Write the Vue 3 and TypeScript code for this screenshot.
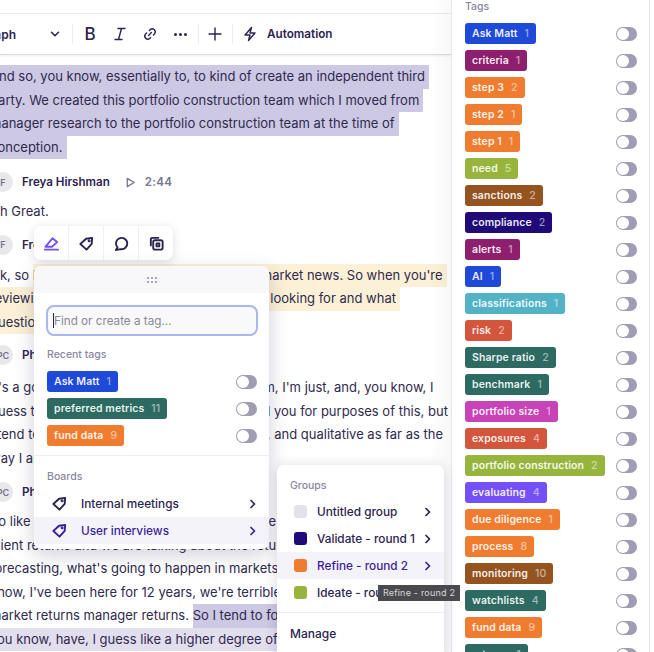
<script setup lang="ts">
interface Tag {
  name: string
  count: number
  color: string
}

const blue = '#1f49d8'
const plum = '#8e1f6e'
const orange = '#f07c30'
const green = '#97b53d'
const brown = '#95531f'
const navy = '#1f0a78'
const cyan = '#52b3c6'
const red = '#d3553c'
const teal = '#2c6a62'
const pink = '#c943b8'
const violet = '#7350f8'

const tags: Tag[] = [
  { name: 'Ask Matt', count: 1, color: blue },
  { name: 'criteria', count: 1, color: plum },
  { name: 'step 3', count: 2, color: orange },
  { name: 'step 2', count: 1, color: orange },
  { name: 'step 1', count: 1, color: orange },
  { name: 'need', count: 5, color: green },
  { name: 'sanctions', count: 2, color: brown },
  { name: 'compliance', count: 2, color: navy },
  { name: 'alerts', count: 1, color: plum },
  { name: 'AI', count: 1, color: blue },
  { name: 'classifications', count: 1, color: cyan },
  { name: 'risk', count: 2, color: red },
  { name: 'Sharpe ratio', count: 2, color: teal },
  { name: 'benchmark', count: 1, color: teal },
  { name: 'portfolio size', count: 1, color: pink },
  { name: 'exposures', count: 4, color: red },
  { name: 'portfolio construction', count: 2, color: green },
  { name: 'evaluating', count: 4, color: violet },
  { name: 'due diligence', count: 1, color: orange },
  { name: 'process', count: 8, color: orange },
  { name: 'monitoring', count: 10, color: brown },
  { name: 'watchlists', count: 4, color: teal },
  { name: 'fund data', count: 9, color: orange },
  { name: 'returns', count: 1, color: teal },
]

const recent: Tag[] = [
  { name: 'Ask Matt', count: 1, color: blue },
  { name: 'preferred metrics', count: 11, color: teal },
  { name: 'fund data', count: 9, color: orange },
]

const groups = [
  { name: 'Untitled group', color: '#e2e2ea', active: false },
  { name: 'Validate - round 1', color: navy, active: false },
  { name: 'Refine - round 2', color: orange, active: true },
  { name: 'Ideate - round 3', color: green, active: false },
]
</script>

<template>
  <div class="page">
    <main class="main">
      <div class="topstrip"></div>
      <div class="toolbar">
        <span class="para">Paragraph</span>
        <svg class="ic chev" viewBox="0 0 16 16"><path d="M4 6l4 4 4-4" /></svg>
        <i class="sep"></i>
        <span class="bold">B</span>
        <svg class="ic ital" viewBox="0 0 16 16"><path d="M6 2.500h7M3 13.500h7M9.500 2.500l-3 11" /></svg>
        <svg class="ic link" viewBox="0 0 16 16"><path d="M6.600 9.400l2.800-2.800M7.400 4.400l1-1a3.100 3.100 0 0 1 4.300 4.300l-1.300 1.300M8.600 11.600l-1 1a3.100 3.100 0 0 1-4.300-4.300l1.300-1.300" /></svg>
        <span class="more"><b></b><b></b><b></b></span>
        <i class="sep"></i>
        <svg class="ic plus" viewBox="0 0 16 16"><path d="M8 2v12M2 8h12" /></svg>
        <i class="sep"></i>
        <svg class="ic bolt" viewBox="0 0 16 16"><path d="M9.500 1.500L3 9h5l-1.500 5.500L13 7H8z" /></svg>
        <span class="auto">Automation</span>
      </div>

      <div class="transcript">
        <div class="para-text first">
          <div><span class="hl">And so, you know, essentially to, to kind of create an independent third</span></div>
          <div><span class="hl">party. We created this portfolio construction team which I moved from</span></div>
          <div><span class="hl">manager research to the portfolio construction team at the time of</span></div>
          <div><span class="hl">conception.</span></div>
        </div>

        <div class="speaker s1">
          <span class="avatar">F</span>
          <span class="who">Freya Hirshman</span>
          <svg class="play" viewBox="0 0 12 12"><path d="M2.500 1.500l7.500 4.500-7.500 4.500z" /></svg>
          <span class="time">2:44</span>
        </div>
        <div class="para-text tight">
          <div>Oh Great.</div>
        </div>

        <div class="speaker s2">
          <span class="avatar">F</span>
          <span class="who">Freya Hirshman</span>
        </div>
        <div class="para-text">
          <div>Ok, so <span class="note">I think one of the things I track is like market news. So when you're</span></div>
          <div><span class="note">reviewing a manager, you know what you are looking for and what</span></div>
          <div><span class="note">questions to ask</span></div>
        </div>

        <div class="speaker s3">
          <span class="avatar">PC</span>
          <span class="who">Phil Carter</span>
        </div>
        <div class="para-text wide">
          <div>It's a good question. Not sure where I am from, I'm just, and, you know, I</div>
          <div>guess that's kind of what I would normally tell you for purposes of this, but</div>
          <div>I tend to be just on the more quantitative side, and qualitative as far as the</div>
          <div>way I approach it.</div>
        </div>

        <div class="speaker">
          <span class="avatar">PC</span>
          <span class="who">Phil Carter</span>
        </div>
        <div class="para-text">
          <div>So like a lot of the time when we talk about the peer</div>
          <div>client returns and we are talking about the return in</div>
          <div>forecasting, what's going to happen in markets and</div>
          <div>know, I've been here for 12 years, we're terrible at</div>
          <div>market returns manager returns. <span class="hl">So I tend to focus on what</span></div>
          <div><span class="hl soft">you know, have, I guess like a higher degree of confidence</span></div>
        </div>
      </div>
    </main>

    <aside class="side">
      <div class="label side-label">Tags</div>
      <div v-for="t in tags" :key="t.name" class="tagrow">
        <span class="tag" :style="{ background: t.color }">{{ t.name }}<em>{{ t.count }}</em></span>
        <span class="toggle"></span>
      </div>
    </aside>

    <!-- floating editor actions -->
    <div class="actions">
      <span class="act">
        <svg viewBox="0 0 18 18" class="violet"><path d="M2.500 12.500L10 3.500l5 4-5.500 5zM2 15.500h14" /></svg>
      </span>
      <span class="act">
        <svg viewBox="0 0 18 18"><path d="M2.500 9.500L8.500 4l6.500-1-.5 6.500-5.500 6z" /><circle cx="11.800" cy="6.200" r=".6" /></svg>
      </span>
      <span class="act">
        <svg viewBox="0 0 18 18"><path d="M4.800 13.200a6 6 0 1 1 3 1.700L3 16z" /></svg>
      </span>
      <span class="act">
        <svg viewBox="0 0 18 18"><path d="M3 11V4.500A1.500 1.500 0 0 1 4.500 3H11" /><rect x="5.500" y="5.500" width="10" height="10" rx="2" /><rect x="9" y="9" width="3" height="3" /></svg>
      </span>
    </div>

    <!-- tag picker -->
    <div class="picker">
      <div class="grip"><span v-for="n in 6" :key="n"></span></div>
      <div class="search">
        <input class="find" type="text" placeholder="Find or create a tag..." />
        <i class="caret"></i>
      </div>
      <div class="label recent-label">Recent tags</div>
      <div v-for="t in recent" :key="t.name" class="tagrow recent">
        <span class="tag" :style="{ background: t.color }">{{ t.name }}<em>{{ t.count }}</em></span>
        <span class="toggle"></span>
      </div>
      <div class="rule"></div>
      <div class="label boards-label">Boards</div>
      <div class="board">
        <svg class="tagic" viewBox="0 0 18 18"><path d="M2.500 9.500L8.500 4l6.500-1-.5 6.500-5.500 6z" /><circle cx="11.800" cy="6.200" r=".6" /></svg>
        <span>Internal meetings</span>
        <svg class="go" viewBox="0 0 10 10"><path d="M3 1.500L6.500 5 3 8.500" /></svg>
      </div>
      <div class="board on">
        <svg class="tagic" viewBox="0 0 18 18"><path d="M2.500 9.500L8.500 4l6.500-1-.5 6.500-5.500 6z" /><circle cx="11.800" cy="6.200" r=".6" /></svg>
        <span>User interviews</span>
        <svg class="go" viewBox="0 0 10 10"><path d="M3 1.500L6.500 5 3 8.500" /></svg>
      </div>
    </div>

    <!-- groups submenu -->
    <div class="groups">
      <div class="label groups-label">Groups</div>
      <div v-for="g in groups" :key="g.name" class="group" :class="{ on: g.active }">
        <span class="swatch" :style="{ background: g.color }"></span>
        <span class="gname">{{ g.name }}</span>
        <svg class="go" viewBox="0 0 10 10"><path d="M3 1.500L6.500 5 3 8.500" /></svg>
      </div>
      <div class="rule gr"></div>
      <div class="manage">Manage</div>
    </div>

    <div class="tooltip">Refine - round 2</div>
  </div>
</template>

<style scoped>
.page {
  position: relative;
  display: flex;
  width: 654px;
  height: 652px;
  overflow: hidden;
  background: #fff;
  color: #2b2350;
  font-family: Inter, "Liberation Sans", sans-serif;
}
.main {
  width: 451px;
  flex: none;
  overflow: hidden;
}
.topstrip {
  height: 13px;
  border-bottom: 1px solid #e9e9ee;
}
.toolbar {
  display: flex;
  align-items: center;
  height: 40px;
  border-bottom: 1px solid #dcdce2;
  box-shadow: 0 1px 2px rgba(30, 30, 60, 0.08);
  white-space: nowrap;
}
.para {
  flex: none;
  width: 70px;
  margin-left: -54px;
  text-align: right;
  font-size: 12px;
  font-weight: 600;
}
.ic {
  flex: none;
  width: 16px;
  height: 16px;
  fill: none;
  stroke: #2b2350;
  stroke-width: 1.400;
  stroke-linecap: round;
  stroke-linejoin: round;
}
.chev {
  margin-left: 32px;
  stroke-width: 1.800;
  width: 14px;
  height: 14px;
}
.sep {
  flex: none;
  width: 1px;
  height: 20px;
  background: #ececf0;
}
.chev + .sep {
  margin-left: 10px;
}
.bold {
  flex: none;
  margin-left: 10px;
  width: 14px;
  text-align: center;
  font-size: 17px;
  font-weight: 500;
}
.ital {
  margin-left: 15px;
}
.link {
  margin-left: 14px;
}
.more {
  flex: none;
  display: flex;
  gap: 2px;
  margin-left: 16px;
  margin-right: 11px;
}
.more b {
  width: 3px;
  height: 3px;
  border-radius: 50%;
  background: #2b2350;
}
.plus {
  margin-left: 8px;
  margin-right: 9px;
}
.bolt {
  margin-left: 9px;
}
.auto {
  margin-left: 9px;
  font-size: 11.700px;
  font-weight: 600;
}
.transcript {
  padding-top: 10px;
  margin-left: -10px;
  font-size: 13px;
  white-space: nowrap;
}
.para-text {
  line-height: 23.500px;
  color: #2f2a4e;
}
.wide {
  margin-top: 11px;
}
.hl {
  display: inline-block;
  padding-right: 4px;
  background: #cdc8e3;
}
.hl.soft {
  background: #e2deee;
}
.note {
  display: inline-block;
  padding-right: 4px;
  background: #fcf1d6;
}
.speaker {
  display: flex;
  align-items: center;
  height: 20px;
  margin: 12px 0 8px;
  font-size: 11.600px;
}
.s1 {
  margin-top: 13px;
  margin-bottom: 8px;
}
.s2 {
  margin-top: 11px;
  margin-bottom: 9px;
}
.s3 {
  margin-top: 11px;
}
.avatar {
  flex: none;
  display: flex;
  align-items: center;
  justify-content: center;
  width: 20px;
  height: 20px;
  margin-left: 3px;
  margin-right: 9px;
  border-radius: 50%;
  background: #e8e7ec;
  color: #76748a;
  font-size: 9px;
  font-weight: 600;
}
.who {
  font-weight: 600;
}
.play {
  width: 11px;
  height: 11px;
  margin-left: 15px;
  fill: none;
  stroke: #77758c;
  stroke-width: 1.400;
  stroke-linejoin: round;
}
.time {
  margin-left: 9px;
  color: #77758c;
  font-weight: 600;
  letter-spacing: 0.3px;
}
.side {
  flex: none;
  width: 199px;
  height: 660px;
  padding-left: 13px;
  box-sizing: border-box;
  background: #fff;
  border-left: 1px solid #e6e6ec;
  border-right: 1px solid #e6e6ec;
  box-shadow: -10px 0 16px rgba(40, 40, 80, 0.04);
}
.label {
  font-size: 10.500px;
  color: #8a87a0;
  font-weight: 500;
}
.side-label {
  height: 13px;
  line-height: 13px;
  margin-bottom: 7px;
}
.tagrow {
  display: flex;
  align-items: center;
  justify-content: space-between;
  height: 27px;
  padding-right: 12px;
}
.tag {
  display: inline-flex;
  align-items: center;
  height: 21px;
  padding: 0 7px;
  border-radius: 3px;
  color: rgba(255, 255, 255, 0.92);
  font-size: 10.500px;
  font-weight: 600;
  letter-spacing: 0.1px;
  white-space: nowrap;
}
.tag em {
  margin-left: 7px;
  font-style: normal;
  font-weight: 500;
  opacity: 0.6;
}
.toggle {
  flex: none;
  position: relative;
  width: 21px;
  height: 14px;
  border-radius: 7px;
  background: #a09cb4;
}
.toggle::after {
  content: "";
  position: absolute;
  left: 1px;
  top: 1px;
  width: 12px;
  height: 12px;
  border-radius: 50%;
  background: #fff;
}
.actions {
  position: absolute;
  left: 34px;
  top: 226px;
  display: flex;
  height: 34px;
  background: #fff;
  border-radius: 7px;
  box-shadow: 0 2px 10px rgba(40, 40, 80, 0.16);
}
.act {
  display: flex;
  align-items: center;
  justify-content: center;
  width: 34px;
  border-left: 1px solid #f0f0f3;
}
.act:first-child {
  border-left: none;
}
.act svg {
  width: 17px;
  height: 17px;
  fill: none;
  stroke: #2b2350;
  stroke-width: 2;
  stroke-linejoin: round;
  stroke-linecap: round;
}
.act svg.violet {
  stroke: #7350f8;
}
.picker {
  position: absolute;
  left: 34px;
  top: 266px;
  width: 235px;
  height: 283px;
  background: #fff;
  border-radius: 7px;
  overflow: hidden;
  box-shadow: 0 6px 20px rgba(40, 40, 80, 0.22);
}
.grip {
  display: grid;
  grid-template-columns: repeat(3, 2px);
  gap: 2px;
  align-content: center;
  justify-content: center;
  height: 27px;
  background: #f8f8fa;
}
.grip span {
  width: 2px;
  height: 2px;
  background: #8f8da0;
  border-radius: 50%;
}
.search {
  position: relative;
  padding: 12px 11px 0 12px;
}
.find {
  display: block;
  width: 100%;
  height: 31px;
  box-sizing: border-box;
  padding: 0 6px;
  border: 2px solid #aab6ee;
  border-radius: 8px;
  background: #faf9f9;
  font-family: inherit;
  font-size: 11.700px;
  color: #2b2350;
  outline: none;
}
.find::placeholder {
  color: #8a8899;
}
.caret {
  position: absolute;
  left: 19px;
  top: 20px;
  width: 1px;
  height: 15px;
  background: #2b2350;
}
.recent-label {
  padding: 12px 13px 0;
  line-height: 13px;
  margin-bottom: 7px;
}
.recent {
  padding: 0 12px 0 13px;
}
.rule {
  height: 1px;
  margin-top: 6px;
  background: #efeff2;
}
.boards-label {
  padding: 14px 13px 0;
  line-height: 13px;
  margin-bottom: 7px;
}
.board {
  display: flex;
  align-items: center;
  height: 27px;
  padding: 0 11px 0 17px;
  font-size: 11.800px;
  font-weight: 500;
}
.board span {
  flex: 1;
  margin-left: 13px;
}
.board.on {
  background: #f5f3fa;
  color: #3a1f96;
}
.tagic {
  width: 17px;
  height: 17px;
  fill: none;
  stroke: currentColor;
  stroke-width: 2;
  stroke-linejoin: round;
}
.go {
  flex: none;
  width: 10px;
  height: 10px;
  fill: none;
  stroke: #2b2350;
  stroke-width: 1.700;
  stroke-linecap: round;
  stroke-linejoin: round;
}
.on .go {
  stroke: #3a1f96;
}
.groups {
  position: absolute;
  left: 277px;
  top: 465px;
  width: 167px;
  height: 195px;
  background: #fff;
  border-radius: 7px;
  box-shadow: 0 2px 14px rgba(40, 40, 80, 0.18);
}
.groups-label {
  padding: 14px 13px 0;
  line-height: 13px;
  margin-bottom: 6px;
}
.group {
  display: flex;
  align-items: center;
  height: 27px;
  padding: 0 11px 0 17px;
  font-size: 11.800px;
  font-weight: 500;
}
.group.on {
  background: #f5f3fa;
  color: #3a1f96;
}
.swatch {
  flex: none;
  width: 13px;
  height: 13px;
  border-radius: 3px;
  margin-right: 10px;
}
.gname {
  flex: 1;
  white-space: nowrap;
}
.gr {
  margin-top: 6px;
}
.manage {
  padding: 13px 13px 0;
  font-size: 12px;
  font-weight: 500;
}
.tooltip {
  position: absolute;
  left: 378px;
  top: 585px;
  width: 82px;
  height: 16px;
  line-height: 16px;
  text-align: center;
  background: #4a4a4e;
  color: #d8d8da;
  font-size: 9px;
  letter-spacing: 0.2px;
  white-space: nowrap;
}
</style>
